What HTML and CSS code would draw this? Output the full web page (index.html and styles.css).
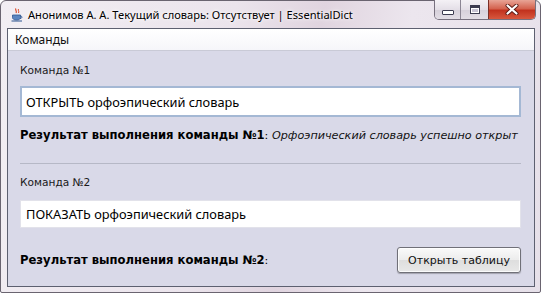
FILE: index.html
```html
<!DOCTYPE html>
<html lang="ru">
<head>
<meta charset="utf-8">
<title>EssentialDict</title>
<link rel="stylesheet" href="styles.css">
</head>
<body>
<div class="window">
  <div class="titlebar">
    <svg class="app-icon" width="12" height="14" viewBox="0 0 12 14">
      <path d="M5 0.5 C3.5 2 6.5 3 5 5" stroke="#d84a2a" stroke-width="1.2" fill="none"/>
      <path d="M7.5 1 C6.5 2.5 8.5 3 7.5 5" stroke="#d84a2a" stroke-width="1" fill="none"/>
      <path d="M1.5 7 H9.5 V9.5 C9.5 11 8 12 5.5 12 C3 12 1.5 11 1.5 9.5 Z" fill="#5b86c0" stroke="#2d5590" stroke-width="0.8"/>
      <path d="M9.5 8 C11.5 8 11.5 10.5 9 10.5" stroke="#2d5590" stroke-width="0.9" fill="none"/>
      <path d="M0.5 13 H11" stroke="#2d5590" stroke-width="1"/>
    </svg>
    <span class="title">Анонимов А. А. Текущий словарь: Отсутствует | EssentialDict</span>
    <div class="caption-buttons">
      <div class="cb cb-min"><span class="min-glyph"></span></div>
      <div class="cb cb-max"><span class="max-glyph"></span></div>
      <div class="cb cb-close">
        <svg width="14" height="11" viewBox="0 0 14 11">
          <path d="M2.5 1.5 L11.5 9.5 M11.5 1.5 L2.5 9.5" stroke="#5a1a14" stroke-width="4" stroke-linecap="round"/>
          <path d="M2.5 1.5 L11.5 9.5 M11.5 1.5 L2.5 9.5" stroke="#ffffff" stroke-width="2.2" stroke-linecap="round"/>
        </svg>
      </div>
    </div>
  </div>
  <div class="client">
    <div class="menubar"><span class="menu-item">Команды</span></div>
    <div class="content">
      <div class="label l1">Команда №1</div>
      <div class="field field-focus">ОТКРЫТЬ орфоэпический словарь</div>
      <div class="result r1"><b>Результат выполнения команды №1</b>: <i>Орфоэпический словарь успешно открыт</i></div>
      <div class="separator"></div>
      <div class="label l2">Команда №2</div>
      <div class="field field-plain">ПОКАЗАТЬ орфоэпический словарь</div>
      <div class="result-row">
        <div class="result"><b>Результат выполнения команды №2</b>:</div>
        <button class="btn">Открыть таблицу</button>
      </div>
    </div>
  </div>
</div>
</body>
</html>
```

FILE: styles.css
```css
html, body {
  margin: 0;
  padding: 0;
  width: 541px;
  height: 293px;
  overflow: hidden;
  background: #ffffff;
}

.window {
  box-sizing: border-box;
  width: 541px;
  height: 293px;
  border: 1px solid #6a6470;
  border-radius: 6px 6px 2px 2px;
  background: linear-gradient(100deg, #f2eef3 0%, #ebe4ec 40%, #e0d4df 55%, #ece6ee 70%, #e6e0e9 100%);
  padding: 0 5px 5px 6px;
  display: flex;
  flex-direction: column;
}

.titlebar {
  height: 27px;
  display: flex;
  align-items: flex-start;
  position: relative;
}

.app-icon {
  margin: 7px 0 0 4px;
  flex: none;
}

.title {
  margin: 6px 0 0 5px;
  font-family: "Noto Sans", sans-serif;
  font-size: 11.1px;
  line-height: 16px;
  color: #000;
  white-space: nowrap;
  text-shadow: 0 0 6px #ffffff, 0 0 3px #ffffff;
}

.caption-buttons {
  margin-left: auto;
  margin-right: -1px;
  margin-top: -1px;
  display: flex;
  height: 19px;
  border: 1px solid #77707e;
  border-top: none;
  border-radius: 0 0 5px 5px;
  overflow: hidden;
}

.cb {
  height: 19px;
  display: flex;
  align-items: center;
  justify-content: center;
}

.cb-min {
  width: 25px;
  background: linear-gradient(#f4f1f5, #e4dfe7 50%, #d6d0da 51%, #e2dde5);
  border-right: 1px solid #8c8694;
}

.cb-max {
  width: 27px;
  background: linear-gradient(#f4f1f5, #e4dfe7 50%, #d6d0da 51%, #e2dde5);
  border-right: 1px solid #7a3028;
}

.cb-close {
  width: 46px;
  background: linear-gradient(#e8a496, #d4634f 45%, #c2321e 55%, #d8583e);
}

.min-glyph {
  width: 10px;
  height: 3px;
  margin-top: 6px;
  background: #fff;
  border: 1px solid #3c3c50;
  border-radius: 1px;
}

.max-glyph {
  width: 8px;
  height: 5px;
  border: 1px solid #3c3c50;
  border-top-width: 3px;
  background: #c8c4d4;
  box-shadow: inset 0 0 0 1px #fff;
}

.client {
  flex: 1;
  border: 1px solid #5d6070;
  background: #d9d9e8;
  display: flex;
  flex-direction: column;
}

.menubar {
  height: 21px;
  background: linear-gradient(#ffffff, #f6f6fa);
  border-bottom: 1px solid #c9cad6;
  display: flex;
  align-items: center;
}

.menu-item {
  margin-left: 7px;
  font-family: "Noto Sans", sans-serif;
  font-size: 12px;
  color: #111;
}

.content {
  padding: 12px 13px 0 12px;
  display: flex;
  flex-direction: column;
}

.label {
  font-family: "DejaVu Sans", sans-serif;
  font-size: 10.6px;
  line-height: 14px;
  color: #1a1a1a;
  height: 14px;
}

.field {
  box-sizing: border-box;
  background: #fff;
  font-family: "Noto Sans", sans-serif;
  font-size: 12.8px;
  color: #000;
  display: flex;
  align-items: center;
  padding-left: 5px;
  white-space: nowrap;
}

.field-focus {
  margin-top: 9px;
  height: 31px;
  border: 2px solid #a4b8d4;
  padding-left: 4px;
}

.field-plain {
  margin-top: 11px;
  height: 28px;
  border: 1px solid #e2e2ea;
}

.result {
  font-family: "DejaVu Sans", sans-serif;
  font-size: 11.2px;
  line-height: 14px;
  color: #000;
  white-space: nowrap;
}

.result b {
  font-weight: bold;
  font-size: 11.6px;
}

.result i {
  color: #111;
}

.r1 {
  margin-top: 11px;
}

.separator {
  margin-top: 20px;
  height: 1px;
  background: #b6b8c6;
}

.l2 {
  margin-top: 11px;
}

.result-row {
  margin-top: 19px;
  display: flex;
  align-items: center;
  justify-content: space-between;
}

.btn {
  box-sizing: border-box;
  width: 124px;
  height: 26px;
  margin: 0;
  padding: 0;
  border: 1px solid #707078;
  border-radius: 3px;
  background: linear-gradient(#fafafa, #ececec 50%, #dedede 51%, #e8e8e8);
  box-shadow: 0 1px 1px rgba(0, 0, 0, 0.25), inset 0 0 0 1px rgba(255, 255, 255, 0.8);
  font-family: "DejaVu Sans", sans-serif;
  font-size: 11px;
  color: #111;
}
```
